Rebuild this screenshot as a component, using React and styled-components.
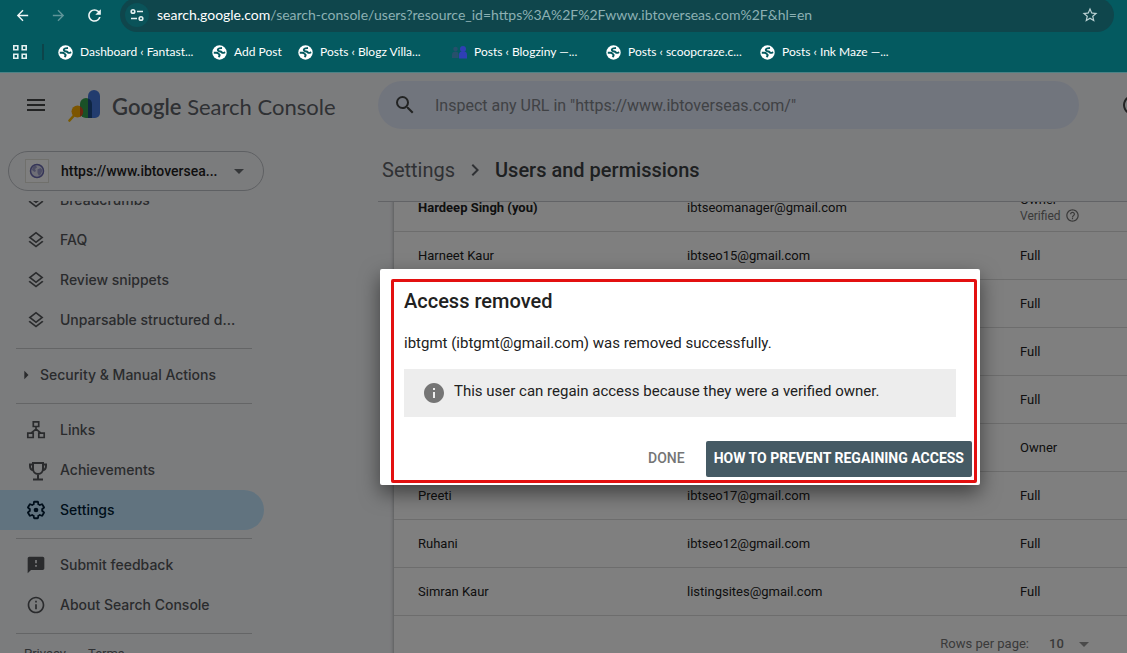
import React from 'react';
import styled, { createGlobalStyle } from 'styled-components';
import {
	MdArrowBack,
	MdArrowDropDown,
	MdArrowForward,
	MdArrowRight,
	MdChevronRight,
	MdFeedback,
	MdHelpOutline,
	MdInfo,
	MdInfoOutline,
	MdMenu,
	MdOutlineLayers,
	MdRefresh,
	MdSearch,
	MdStarBorder,
} from 'react-icons/md';

const bookmarks = [
	{ title: 'Dashboard ‹ Fantast...', width: 137 },
	{ title: 'Add Post', width: 69 },
	{ title: 'Posts ‹ Blogz Villa...', width: 137 },
	{ title: 'Posts ‹ Blogziny —...', width: 137, icon: 'people' },
	{ title: 'Posts ‹ scoopcraze.c...', width: 137 },
	{ title: 'Posts ‹ Ink Maze —...', width: 137 },
];

const users = [
	{ id: 1, name: 'Hardeep Singh (you)', email: 'ibtseomanager@gmail.com', permission: 'Owner', verified: true },
	{ id: 2, name: 'Harneet Kaur', email: 'ibtseo15@gmail.com', permission: 'Full' },
	{ id: 3, permission: 'Full' },
	{ id: 4, permission: 'Full' },
	{ id: 5, permission: 'Full' },
	{ id: 6, permission: 'Owner' },
	{ id: 7, name: 'Preeti', email: 'ibtseo17@gmail.com', permission: 'Full' },
	{ id: 8, name: 'Ruhani', email: 'ibtseo12@gmail.com', permission: 'Full' },
	{ id: 9, name: 'Simran Kaur', email: 'listingsites@gmail.com', permission: 'Full' },
];

function GlobeIcon() {
	return (
		<svg width="15" height="15" viewBox="0 0 15 15" aria-hidden="true">
			<circle cx="7.5" cy="7.5" r="7.2" fill="#fff" />
			<path
				d="M10 3C8 3.200 6 3 5.800 4.600c-.1 1.600 1.400 1.700 2.700 1.900 1.200.2 1.200 1.400 2.400 1.400 1 0 1.400-.3 2.200-.8M1.800 7.800h2.700c1.600 0 1.800 1 2.700 1.500 1 .5.4 1.600-.7 2.700"
				fill="none"
				stroke="#045a60"
				strokeWidth="1.900"
			/>
		</svg>
	);
}

function PeopleIcon() {
	return (
		<svg width="15" height="15" viewBox="0 0 15 15" aria-hidden="true">
			<g fill="#27506b">
				<circle cx="3.500" cy="4" r="2.300" />
				<path d="M0 13V9.500C0 7.500 1.500 6.500 3.500 6.500S6.500 7.500 6.500 9.500V13z" />
			</g>
			<g fill="#2f3fb5">
				<circle cx="11" cy="4" r="3" />
				<path d="M7 13.500V9.500C7 7.500 8.700 6.300 11 6.300s4 1.200 4 3.200v4z" />
			</g>
		</svg>
	);
}

function TuneIcon() {
	return (
		<svg width="16" height="16" viewBox="0 0 16 16" fill="none" stroke="#e4f0f0" strokeWidth="1.600" aria-hidden="true">
			<circle cx="4" cy="4.500" r="1.800" />
			<path d="M8 4.500h6M2 11.500h6" />
			<circle cx="12" cy="11.500" r="1.800" />
		</svg>
	);
}

function AppsIcon() {
	return (
		<svg width="16" height="16" viewBox="0 0 16 16" fill="none" stroke="#e4f0f0" strokeWidth="1.600" aria-hidden="true">
			<path d="M1.800 1.800h4v4h-4zM10.200 1.800h4v4h-4zM1.800 10.200h4v4h-4zM10.200 10.200h4v4h-4z" />
		</svg>
	);
}

function ConsoleLogo() {
	return (
		<svg width="34" height="34" viewBox="0 0 34 34" aria-hidden="true">
			<g transform="translate(0 1)">
				<path d="M6 26.500l-4.500 5" stroke="#f5b400" strokeWidth="2.600" strokeLinecap="round" />
				<circle cx="9.500" cy="22.500" r="6" fill="#f9ab00" />
				<path d="M12 15a6 6 0 0 1 12 0v14h-6a6 6 0 0 1-6-6z" fill="#34a04e" />
				<path d="M12 17.200a6 6 0 0 1 0 10.600z" fill="#d64a1e" />
				<path d="M20 7a6 6 0 0 1 12 0v17a5 5 0 0 1-5 5h-7z" fill="#4478dc" />
				<path d="M20 9.500c2.500.8 4 3 4 5.500v14h-4z" fill="#1d4a86" />
			</g>
		</svg>
	);
}

function SiteIcon() {
	return (
		<svg width="16" height="16" viewBox="0 0 16 16" aria-hidden="true">
			<circle cx="8" cy="8" r="6.500" fill="#dcdcec" stroke="#6a6ab0" strokeWidth="1.500" />
			<path d="M4 3.500l3-1 1 2-2 1.500 1 2-1.500 1L3 7zM8.500 6.500l3-1.500 2 2-1.500 4-2 2-1.500-3z" fill="#9a9ac8" />
		</svg>
	);
}

function LinksIcon() {
	return (
		<svg width="20" height="20" viewBox="0 0 20 20" fill="none" stroke="currentColor" strokeWidth="1.700" aria-hidden="true">
			<path d="M7.300 1.800h5.400v4.700H7.300zM1.800 13.200h5.400v4.300H1.800zM12.800 13.200h5.400v4.300h-5.400zM10 6.500v3M5 13.200l5-4 5 4" />
		</svg>
	);
}

function TrophyIcon() {
	return (
		<svg width="24" height="24" viewBox="0 0 24 24" fill="none" stroke="currentColor" strokeWidth="2" aria-hidden="true">
			<path d="M9 5h10v6a5 5 0 0 1-10 0zM9 6.500H6V8c0 2.500 1.500 4 3.500 4.300M19 6.500h3V8c0 2.500-1.500 4-3.500 4.300M14 16v5M9 21.500h10" />
		</svg>
	);
}

function GearIcon() {
	return (
		<svg width="24" height="24" viewBox="0 0 24 24" aria-hidden="true">
			<g transform="translate(12 12) scale(.86) translate(-12 -12)">
				<path
					d="M19.140 12.940c.04-.3.06-.61.06-.94 0-.32-.02-.64-.07-.94l2.030-1.580c.18-.14.23-.41.12-.61l-1.920-3.320c-.12-.22-.37-.29-.59-.22l-2.390.96c-.5-.38-1.030-.7-1.620-.94l-.36-2.540c-.04-.24-.24-.41-.48-.41h-3.840c-.24 0-.43.17-.47.41l-.36 2.540c-.59.24-1.130.57-1.620.94l-2.390-.96c-.22-.08-.47 0-.59.22L2.740 8.870c-.12.21-.08.47.12.61l2.030 1.580c-.05.3-.09.63-.09.94s.02.64.07.94l-2.030 1.580c-.18.14-.23.41-.12.61l1.920 3.320c.12.22.37.29.59.22l2.390-.96c.5.38 1.030.7 1.620.94l.36 2.540c.05.24.24.41.48.41h3.840c.24 0 .44-.17.47-.41l.36-2.540c.59-.24 1.130-.56 1.620-.94l2.390.96c.22.08.47 0 .59-.22l1.920-3.320c.12-.22.07-.47-.12-.61l-2.010-1.580z"
					fill="none"
					stroke="currentColor"
					strokeWidth="2.100"
				/>
				<circle cx="12" cy="12" r="2.700" fill="currentColor" />
			</g>
		</svg>
	);
}

export default function App() {
	return (
		<Page>
			<GlobalStyle />

			<Browser>
				<Toolbar>
					<ToolButton aria-label="Back"><MdArrowBack size={17} /></ToolButton>
					<ToolButton aria-label="Forward" $dim><MdArrowForward size={17} /></ToolButton>
					<ToolButton aria-label="Reload"><MdRefresh size={19} /></ToolButton>
					<Omnibox>
						<SiteInfo aria-label="Site information"><TuneIcon /></SiteInfo>
						<Address>
							<b>search.google.com</b>/search-console/users?resource_id=https%3A%2F%2Fwww.ibtoverseas.com%2F&amp;hl=en
						</Address>
						<StarButton aria-label="Bookmark this page"><MdStarBorder size={18} /></StarButton>
					</Omnibox>
				</Toolbar>
				<Bookmarks>
					<AppsButton aria-label="Apps"><AppsIcon /></AppsButton>
					{bookmarks.map((bookmark) => (
						<Bookmark href="#" key={bookmark.title} $width={bookmark.width}>
							{bookmark.icon === 'people' ? <PeopleIcon /> : <GlobeIcon />}
							{bookmark.title}
						</Bookmark>
					))}
				</Bookmarks>
			</Browser>

			<Console>
				<Header>
					<Brand>
						<IconButton aria-label="Main menu"><MdMenu size={24} /></IconButton>
						<ConsoleLogo />
						<BrandName><b>Google</b> Search Console</BrandName>
					</Brand>
					<SearchBox>
						<MdSearch size={24} />
						<input type="text" aria-label="Inspect URL" placeholder={'Inspect any URL in "https://www.ibtoverseas.com/"'} />
					</SearchBox>
					<HelpButton aria-label="Help"><MdHelpOutline size={24} /></HelpButton>
				</Header>

				<Body>
					<Sidebar>
						<Property>
							<SiteBadge><SiteIcon /></SiteBadge>
							<select aria-label="Property">
								<option>https://www.ibtoversea...</option>
							</select>
							<MdArrowDropDown size={24} />
						</Property>
						<NavScroll>
							<Nav>
								<NavItem href="#"><MdOutlineLayers size={20} />Breadcrumbs</NavItem>
								<NavItem href="#"><MdOutlineLayers size={20} />FAQ</NavItem>
								<NavItem href="#"><MdOutlineLayers size={20} />Review snippets</NavItem>
								<NavItem href="#"><MdOutlineLayers size={20} />Unparsable structured d...</NavItem>
								<Divider />
								<NavGroup><MdArrowRight size={20} />Security &amp; Manual Actions</NavGroup>
								<Divider />
								<NavItem href="#"><LinksIcon />Links</NavItem>
								<NavItem href="#"><TrophyIcon />Achievements</NavItem>
								<NavItem href="#" $active><GearIcon />Settings</NavItem>
								<Divider />
								<NavItem href="#"><MdFeedback size={20} />Submit feedback</NavItem>
								<NavItem href="#"><MdInfoOutline size={20} />About Search Console</NavItem>
								<Divider />
								<Legal>
									<a href="#">Privacy</a>
									<a href="#">Terms</a>
								</Legal>
							</Nav>
						</NavScroll>
					</Sidebar>

					<Main>
						<Breadcrumb>
							<a href="#">Settings</a>
							<MdChevronRight size={24} />
							<h1>Users and permissions</h1>
						</Breadcrumb>
						<Content>
							<Card>
								<Table>
									<colgroup>
										<col width="269" />
										<col width="333" />
										<col />
									</colgroup>
									<tbody>
										{users.map((user) => (
											<tr key={user.id}>
												<Cell $bold={user.verified}>{user.name}</Cell>
												<Cell>{user.email}</Cell>
												<Cell>
													{user.permission}
													{user.verified && (
														<Verified>
															Verified <MdHelpOutline size={15} />
														</Verified>
													)}
												</Cell>
											</tr>
										))}
									</tbody>
								</Table>
								<Pager>
									<label htmlFor="rows">Rows per page:</label>
									<select id="rows"><option>10</option></select>
									<MdArrowDropDown size={24} />
								</Pager>
							</Card>
						</Content>
					</Main>
				</Body>

				<Scrim>
					<Dialog role="dialog" aria-labelledby="dialog-title">
						<DialogTitle id="dialog-title">Access removed</DialogTitle>
						<DialogText>ibtgmt (ibtgmt@gmail.com) was removed successfully.</DialogText>
						<Notice>
							<MdInfo size={24} />
							<span>This user can regain access because they were a verified owner.</span>
						</Notice>
						<Actions>
							<DialogButton>DONE</DialogButton>
							<DialogButton $primary>HOW TO PREVENT REGAINING ACCESS</DialogButton>
						</Actions>
						<Highlight />
					</Dialog>
				</Scrim>
			</Console>
		</Page>
	);
}

const GlobalStyle = createGlobalStyle`
	* {
		box-sizing: border-box;
	}

	body {
		margin: 0;
		font-family: Roboto, sans-serif;
	}

	button,
	select,
	input {
		font: inherit;
		color: inherit;
		border: 0;
		padding: 0;
		margin: 0;
		background: none;
		outline: none;
		appearance: none;
	}

	a {
		color: inherit;
		text-decoration: none;
	}

	svg {
		flex-shrink: 0;
	}
`;

const Page = styled.div`
	display: flex;
	flex-direction: column;
	height: 100vh;
	overflow: hidden;
`;

const Browser = styled.div`
	height: 72px;
	flex-shrink: 0;
	background: #045a60;
	color: #fff;
	font-family: Lato, sans-serif;
`;

const Toolbar = styled.div`
	display: flex;
	align-items: center;
	height: 32px;
	padding: 0 13px 2px 4px;
`;

const ToolButton = styled.button`
	display: flex;
	align-items: center;
	justify-content: center;
	width: 36px;
	height: 30px;
	color: ${({ $dim }) => ($dim ? '#5f9599' : '#f0f7f7')};
`;

const Omnibox = styled.div`
	display: flex;
	align-items: center;
	flex: 1;
	height: 34px;
	margin-left: 8px;
	padding: 0 15px 0 5px;
	border-radius: 17px;
	background: #0f464c;
`;

const SiteInfo = styled.button`
	display: flex;
	align-items: center;
	justify-content: center;
	width: 24px;
	height: 24px;
	border-radius: 12px;
	background: #0a5359;
`;

const Address = styled.span`
	flex: 1;
	padding-left: 8px;
	font-size: 14px;
	line-height: 20px;
	white-space: nowrap;
	color: #8cb0b3;

	b {
		font-weight: 400;
		color: #fff;
	}
`;

const StarButton = styled.button`
	display: flex;
	color: #bcd2d4;
`;

const Bookmarks = styled.div`
	display: flex;
	align-items: center;
	height: 40px;
	padding-left: 12px;
`;

const AppsButton = styled.button`
	display: flex;
	align-items: center;
	height: 16px;
	padding-right: 14px;
	margin-right: 14px;
	border-right: 2px solid #0d444a;
`;

const Bookmark = styled.a`
	display: flex;
	align-items: center;
	gap: 7px;
	width: ${({ $width }) => $width}px;
	margin-right: 17px;
	font-size: 12px;
	line-height: 16px;
	white-space: nowrap;
`;

const Console = styled.div`
	position: relative;
	display: flex;
	flex-direction: column;
	flex: 1;
	min-height: 0;
	overflow: hidden;
	border-top: 1px solid #4d8286;
	background: #f7f8fb;
	color: #444746;
`;

const Header = styled.header`
	display: flex;
	align-items: center;
	height: 64px;
	flex-shrink: 0;
`;

const Brand = styled.div`
	display: flex;
	align-items: center;
	width: 378px;
	padding-left: 24px;
	flex-shrink: 0;
`;

const IconButton = styled.button`
	display: flex;
	margin-right: 20px;
`;

const BrandName = styled.span`
	padding: 4px 0 0 10px;
	font-family: Lato, sans-serif;
	font-size: 22px;
	line-height: 32px;
	color: #5f6368;
	white-space: nowrap;

	b {
		font-weight: 600;
	}
`;

const SearchBox = styled.label`
	display: flex;
	align-items: center;
	flex: 1;
	height: 48px;
	padding-left: 15px;
	border-radius: 24px;
	background: #e3eafb;

	input {
		flex: 1;
		padding: 2px 0 0 18px;
		font-size: 16px;
		line-height: 24px;
	}

	input::placeholder {
		color: #80848a;
		opacity: 1;
	}
`;

const HelpButton = styled.button`
	display: flex;
	margin: 0 -18px 0 42px;
`;

const Body = styled.div`
	display: flex;
	flex: 1;
	min-height: 0;
`;

const Sidebar = styled.aside`
	display: flex;
	flex-direction: column;
	width: 378px;
	flex-shrink: 0;
	padding-top: 14px;
	font-family: Inter, sans-serif;
`;

const Property = styled.div`
	display: flex;
	align-items: center;
	width: 256px;
	height: 40px;
	flex-shrink: 0;
	margin-left: 8px;
	padding: 0 12px 0 16px;
	border: 1px solid #bdc1c6;
	border-radius: 20px;

	select {
		flex: 1;
		min-width: 0;
		padding-left: 12px;
		font-family: Roboto, sans-serif;
		font-size: 14px;
		font-weight: 500;
		color: #1f1f1f;
	}

	> svg {
		color: #6b6e72;
	}
`;

const SiteBadge = styled.span`
	display: flex;
	align-items: center;
	justify-content: center;
	width: 24px;
	height: 24px;
	flex-shrink: 0;
	border: 1px solid #e0e0d8;
	background: #fff;
`;

const NavScroll = styled.div`
	flex: 1;
	min-height: 0;
	margin-top: 10px;
	overflow: hidden;
`;

// the list is scrolled part of the way down
const Nav = styled.nav`
	width: 264px;
	margin-top: -21px;
`;

const NavItem = styled.a`
	display: flex;
	align-items: center;
	height: 40px;
	padding: 0 0 2px 24px;
	border-radius: 0 20px 20px 0;
	font-size: 14px;
	font-weight: 500;
	color: ${({ $active }) => ($active ? '#001d35' : '#54575a')};
	background: ${({ $active }) => ($active ? '#c2e7ff' : 'none')};

	svg {
		width: 24px;
		margin: 2px 12px 0 0;
	}
`;

const NavGroup = styled.button`
	display: flex;
	align-items: center;
	height: 40px;
	padding: 0 0 2px 16px;
	font-size: 14px;
	font-weight: 500;
	color: #54575a;

	svg {
		margin: 2px 4px 0 0;
	}
`;

const Divider = styled.hr`
	height: 1px;
	margin: 8px 12px 6px 16px;
	border: 0;
	background: #c8cacd;
`;

const Legal = styled.div`
	display: flex;
	gap: 22px;
	padding: 6px 24px;
	font-family: Roboto, sans-serif;
	font-size: 13px;
	line-height: 16px;
	color: #5f6368;
`;

const Main = styled.main`
	display: flex;
	flex-direction: column;
	flex: 1;
	min-width: 0;
	overflow: hidden;
`;

const Breadcrumb = styled.div`
	display: flex;
	align-items: center;
	gap: 8px;
	height: 65px;
	flex-shrink: 0;
	padding: 2px 0 0 4px;
	border-bottom: 1px solid #c4c7cc;
	font-size: 20px;
	line-height: 24px;

	a {
		color: #5f6368;
	}

	h1 {
		margin: 0;
		font-size: 20px;
		font-weight: 500;
		color: #3c4043;
	}

	svg {
		color: #5f6368;
	}
`;

const Content = styled.div`
	flex: 1;
	min-height: 0;
	padding-left: 16px;
	overflow: hidden;
`;

const Card = styled.section`
	margin-top: -19px;
	padding-bottom: 16px;
	background: #fff;
	box-shadow: 0 1px 4px rgba(0, 0, 0, 0.4);
`;

const Table = styled.table`
	width: 100%;
	border-collapse: collapse;
	table-layout: fixed;
`;

const Cell = styled.td`
	height: 48px;
	padding: 2px 0 0 24px;
	border-bottom: 1px solid #dadada;
	font-size: 13px;
	font-weight: ${({ $bold }) => ($bold ? 700 : 400)};
	line-height: 16px;
	color: #212121;
	white-space: nowrap;
`;

const Verified = styled.div`
	display: flex;
	align-items: center;
	gap: 4px;
	font-size: 12px;
	line-height: 14px;
	color: #757575;
`;

const Pager = styled.div`
	display: flex;
	align-items: center;
	justify-content: flex-end;
	height: 56px;
	padding-right: 31px;
	font-size: 13px;
	color: #757575;

	select {
		margin: 0 8px 0 20px;
		font-weight: 500;
	}

	svg {
		color: #949494;
	}
`;

const Scrim = styled.div`
	position: absolute;
	inset: 0;
	display: flex;
	align-items: center;
	justify-content: center;
	padding: 28px 0 0 233px;
	background: rgba(0, 0, 0, 0.5);
`;

const Dialog = styled.div`
	position: relative;
	width: 600px;
	padding: 20px 8px 8px 24px;
	border-radius: 2px;
	background: #fff;
	color: #212121;
	box-shadow: 0 8px 20px rgba(0, 0, 0, 0.5);
`;

const DialogTitle = styled.h2`
	margin: 0 0 20px;
	font-size: 20px;
	font-weight: 500;
	line-height: 24px;
`;

const DialogText = styled.p`
	margin: 0 0 16px;
	font-size: 15px;
	line-height: 20px;
`;

const Notice = styled.div`
	display: flex;
	align-items: center;
	gap: 8px;
	height: 48px;
	margin-right: 16px;
	padding-left: 18px;
	background: #ededed;
	font-size: 15px;
	line-height: 20px;

	svg {
		color: #757575;
	}

	span {
		padding-bottom: 4px;
	}
`;

const Actions = styled.div`
	display: flex;
	justify-content: flex-end;
	gap: 13px;
	margin-top: 24px;
`;

const DialogButton = styled.button`
	height: 36px;
	padding: 0 8px 2px;
	border-radius: 2px;
	font-size: 14px;
	font-weight: ${({ $primary }) => ($primary ? 700 : 500)};
	color: ${({ $primary }) => ($primary ? '#fff' : '#757575')};
	background: ${({ $primary }) => ($primary ? '#455a64' : 'none')};
`;

const Highlight = styled.div`
	position: absolute;
	inset: 10px 3px 2px 11px;
	border: 3px solid #e31010;
	border-radius: 2px;
	pointer-events: none;
`;
